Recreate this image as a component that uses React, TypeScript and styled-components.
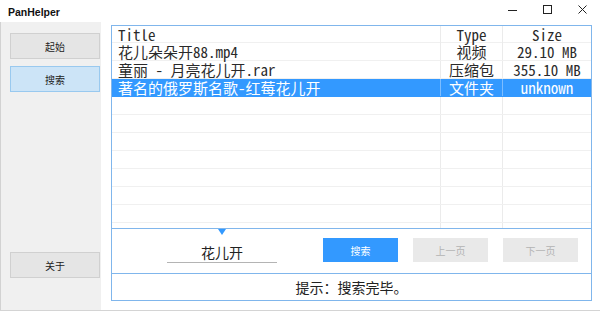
import React from "react";
import styled, { createGlobalStyle } from "styled-components";

const GlobalStyle = createGlobalStyle`
  html, body { margin: 0; padding: 0; background: #fff; }
  body { font-family: "Noto Sans CJK SC", "Noto Sans", sans-serif; }
  * { box-sizing: border-box; }
`;

const Window = styled.div`
  width: 600px;
  height: 311px;
  display: flex;
  flex-direction: column;
  background: #fff;
  overflow: hidden;
`;

const TitleBar = styled.div`
  height: 22px;
  flex: none;
  display: flex;
  justify-content: space-between;
  align-items: flex-start;
  padding-left: 8px;
`;

const Title = styled.div`
  font-family: "Liberation Sans", Arial, sans-serif;
  font-weight: 700;
  font-size: 10.5px;
  line-height: 24px;
  color: #111;
`;

const Controls = styled.div`
  display: flex;
`;

const ControlButton = styled.div`
  width: 35px;
  height: 20px;
  display: flex;
  align-items: center;
  justify-content: center;
  color: #222;
`;

const Body = styled.div`
  flex: 1;
  display: flex;
  border-bottom: 1px solid #d4d4d4;
  min-height: 0;
`;

const Sidebar = styled.div`
  width: 101px;
  flex: none;
  background: #f0f0f0;
  border-left: 1px solid #d2d2d2;
  padding: 11px 0 32px 9px;
  display: flex;
  flex-direction: column;
  gap: 7px;
`;

const SideButton = styled.div<{ $active?: boolean; $bottom?: boolean }>`
  width: 90px;
  height: 26px;
  flex: none;
  display: flex;
  align-items: center;
  justify-content: center;
  font-size: 10px;
  color: #222;
  background: ${(p) => (p.$active ? "#cce4f7" : "#e5e5e5")};
  border: 1px solid ${(p) => (p.$active ? "#99c9ef" : "#d0d0d0")};
  margin-top: ${(p) => (p.$bottom ? "auto" : "0")};
`;

const Main = styled.div`
  flex: 1;
  padding: 3px 8px 9px 10px;
  display: flex;
  min-width: 0;
`;

const Panel = styled.div`
  flex: 1;
  border: 1px solid #80b6ec;
  display: flex;
  flex-direction: column;
`;

const TableArea = styled.div`
  height: 202px;
  flex: none;
  overflow: hidden;
  font-family: "Noto Sans Mono CJK SC", "Liberation Mono", "Noto Sans CJK SC", monospace;
  font-size: 15px;
  color: #2a2a2a;
`;

const Row = styled.div<{ $header?: boolean; $selected?: boolean }>`
  display: grid;
  grid-template-columns: 329px 62px 1fr;
  height: ${(p) => (p.$header ? "17px" : "18px")};
  background: ${(p) => (p.$selected ? "#3399ff" : "transparent")};
  color: ${(p) => (p.$selected ? "#fff" : "inherit")};
  border-bottom: 1px solid ${(p) => (p.$selected ? "#3399ff" : "#f0f0f0")};
`;

const Cell = styled.div<{ $align?: "left" | "center"; $selected?: boolean; $last?: boolean }>`
  display: flex;
  align-items: center;
  justify-content: ${(p) => (p.$align === "center" ? "center" : "flex-start")};
  padding-left: ${(p) => (p.$align === "center" ? "0" : "6px")};
  white-space: pre;
  line-height: 17px;
  border-right: ${(p) => (p.$last ? "none" : `1px solid ${p.$selected ? "#7dbdff" : "#ebebeb"}`)};
`;

const BottomBar = styled.div`
  height: 45px;
  flex: none;
  border-top: 1px solid #80b6ec;
  display: flex;
  align-items: flex-start;
  padding-left: 55px;
`;

const InputCol = styled.div`
  width: 110px;
  height: 34px;
  display: flex;
  flex-direction: column;
  align-items: center;
  border-bottom: 1px solid #b4b4b4;
`;

const Marker = styled.div`
  width: 0;
  height: 0;
  border-left: 4px solid transparent;
  border-right: 4px solid transparent;
  border-top: 6px solid #3399ff;
  flex: none;
`;

const InputText = styled.div`
  flex: 1;
  display: flex;
  align-items: flex-end;
  font-size: 14px;
  line-height: 18px;
  padding-bottom: 1px;
  color: #222;
`;

const ActionButton = styled.div<{ $primary?: boolean; $gap: number }>`
  width: 75px;
  height: 24px;
  margin-top: 9px;
  margin-left: ${(p) => p.$gap}px;
  display: flex;
  align-items: center;
  justify-content: center;
  font-size: 10px;
  background: ${(p) => (p.$primary ? "#3399ff" : "#e9e9e9")};
  color: ${(p) => (p.$primary ? "#fff" : "#b3b3b3")};
`;

const StatusBar = styled.div`
  flex: 1;
  border-top: 1px solid #80b6ec;
  display: flex;
  align-items: center;
  justify-content: center;
  font-size: 14px;
  color: #222;
`;

type FileRow = { title: string; type: string; size: string; selected?: boolean };

const rows: FileRow[] = [
  { title: "花儿朵朵开88.mp4", type: "视频", size: "29.10 MB" },
  { title: "童丽 - 月亮花儿开.rar", type: "压缩包", size: "355.10 MB" },
  { title: "著名的俄罗斯名歌-红莓花儿开", type: "文件夹", size: "unknown", selected: true },
];

const emptyRows = Array.from({ length: 9 }, (_, i) => i);

export default function App() {
  return (
    <>
      <GlobalStyle />
      <Window>
        <TitleBar>
          <Title>PanHelper</Title>
          <Controls>
            <ControlButton>
              <svg width="10" height="10" viewBox="0 0 10 10">
                <path d="M0 5.5H9" stroke="currentColor" strokeWidth="1" fill="none" />
              </svg>
            </ControlButton>
            <ControlButton>
              <svg width="10" height="10" viewBox="0 0 10 10">
                <rect x="0.5" y="0.5" width="8" height="8" stroke="currentColor" strokeWidth="1" fill="none" />
              </svg>
            </ControlButton>
            <ControlButton>
              <svg width="10" height="10" viewBox="0 0 10 10">
                <path d="M0.5 0.5L8.5 8.5M8.5 0.5L0.5 8.5" stroke="currentColor" strokeWidth="1" fill="none" />
              </svg>
            </ControlButton>
          </Controls>
        </TitleBar>
        <Body>
          <Sidebar>
            <SideButton>起始</SideButton>
            <SideButton $active>搜索</SideButton>
            <SideButton $bottom>关于</SideButton>
          </Sidebar>
          <Main>
            <Panel>
              <TableArea>
                <Row $header>
                  <Cell>Title</Cell>
                  <Cell $align="center">Type</Cell>
                  <Cell $align="center" $last>Size</Cell>
                </Row>
                {rows.map((r) => (
                  <Row key={r.title} $selected={r.selected}>
                    <Cell $selected={r.selected}>{r.title}</Cell>
                    <Cell $align="center" $selected={r.selected}>{r.type}</Cell>
                    <Cell $align="center" $selected={r.selected} $last>{r.size}</Cell>
                  </Row>
                ))}
                {emptyRows.map((i) => (
                  <Row key={i}>
                    <Cell />
                    <Cell />
                    <Cell $last />
                  </Row>
                ))}
              </TableArea>
              <BottomBar>
                <InputCol>
                  <Marker />
                  <InputText>花儿开</InputText>
                </InputCol>
                <ActionButton $primary $gap={46}>搜索</ActionButton>
                <ActionButton $gap={15}>上一页</ActionButton>
                <ActionButton $gap={15}>下一页</ActionButton>
              </BottomBar>
              <StatusBar>提示：搜索完毕。</StatusBar>
            </Panel>
          </Main>
        </Body>
      </Window>
    </>
  );
}
